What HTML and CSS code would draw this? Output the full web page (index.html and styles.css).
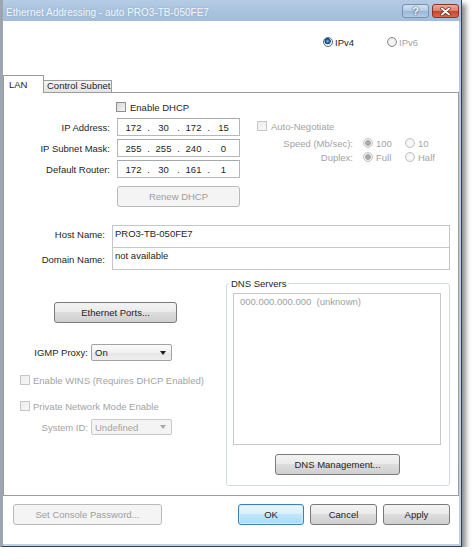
FILE: index.html
```html
<!DOCTYPE html>
<html>
<head>
<meta charset="utf-8">
<title>Ethernet Addressing</title>
<link rel="stylesheet" href="styles.css">
</head>
<body>
<div class="window">
  <div class="titlebar">
    <span class="title">Ethernet Addressing - auto PRO3-TB-050FE7</span>
    <div class="tb-buttons">
      <div class="tb-btn help">?</div>
      <div class="tb-btn close">
        <svg width="11" height="9" viewBox="0 0 11 9"><path d="M2 1.5 L9 7.5 M9 1.5 L2 7.5" stroke="#5a1a10" stroke-width="3.2" stroke-linecap="round"/><path d="M2 1.5 L9 7.5 M9 1.5 L2 7.5" stroke="#ffffff" stroke-width="2" stroke-linecap="round"/></svg>
      </div>
    </div>
  </div>
  <div class="client">
    <div class="ipver">
      <div class="radio"><span class="rb on"></span><span>IPv4</span></div>
      <div class="radio dis"><span class="rb"></span><span>IPv6</span></div>
    </div>
    <div class="tabs">
      <div class="tab active">LAN</div>
      <div class="tab inactive">Control Subnet</div>
    </div>
    <div class="panel">
      <div class="sec-a">
        <div class="ipcol">
          <div class="check-row dhcp-row"><span class="cb"></span><span>Enable DHCP</span></div>
          <div class="iprow first">
            <span class="lbl-ip">IP Address:</span>
            <div class="ipbox"><span class="oct">172</span><span class="dot">.</span><span class="oct">30</span><span class="dot">.</span><span class="oct">172</span><span class="dot">.</span><span class="oct">15</span></div>
          </div>
          <div class="iprow">
            <span class="lbl-ip">IP Subnet Mask:</span>
            <div class="ipbox"><span class="oct">255</span><span class="dot">.</span><span class="oct">255</span><span class="dot">.</span><span class="oct">240</span><span class="dot">.</span><span class="oct">0</span></div>
          </div>
          <div class="iprow">
            <span class="lbl-ip">Default Router:</span>
            <div class="ipbox"><span class="oct">172</span><span class="dot">.</span><span class="oct">30</span><span class="dot">.</span><span class="oct">161</span><span class="dot">.</span><span class="oct">1</span></div>
          </div>
          <div class="btn dis btn-renew">Renew DHCP</div>
        </div>
        <div class="linkcol">
          <div class="check-row auto-row dis"><span class="cb dis"></span><span>Auto-Negotiate</span></div>
          <div class="link-row speed-row">
            <span class="lbl-link">Speed (Mb/sec):</span>
            <div class="opt dis"><span class="rb dis on"></span><span>100</span></div>
            <div class="opt dis"><span class="rb dis"></span><span>10</span></div>
          </div>
          <div class="link-row duplex-row">
            <span class="lbl-link">Duplex:</span>
            <div class="opt dis"><span class="rb dis on"></span><span>Full</span></div>
            <div class="opt dis"><span class="rb dis"></span><span>Half</span></div>
          </div>
        </div>
      </div>

      <div class="names">
        <div class="namerow host">
          <span class="lbl-name">Host Name:</span>
          <div class="namebox">PRO3-TB-050FE7</div>
        </div>
        <div class="namerow domain">
          <span class="lbl-name">Domain Name:</span>
          <div class="namebox">not available</div>
        </div>
      </div>

      <div class="sec-c">
        <div class="leftcol">
          <div class="btn btn-eth">Ethernet Ports...</div>
          <div class="sel-row igmp-row">
            <span class="lbl-sel">IGMP Proxy:</span>
            <div class="select"><span>On</span><span class="arrow"></span></div>
          </div>
          <div class="check-row wins-row dis"><span class="cb dis"></span><span>Enable WINS (Requires DHCP Enabled)</span></div>
          <div class="check-row priv-row dis"><span class="cb dis"></span><span>Private Network Mode Enable</span></div>
          <div class="sel-row sysid-row dis">
            <span class="lbl-sel">System ID:</span>
            <div class="select dis"><span>Undefined</span><span class="arrow"></span></div>
          </div>
        </div>
        <div class="group">
          <div class="group-title">DNS Servers</div>
          <div class="listbox">000.000.000.000  (unknown)</div>
          <div class="btn btn-dns">DNS Management...</div>
        </div>
      </div>
    </div>

    <div class="footer">
      <div class="btn dis btn-pw">Set Console Password...</div>
      <div class="btn ok btn-ok">OK</div>
      <div class="btn btn-cancel">Cancel</div>
      <div class="btn btn-apply">Apply</div>
    </div>
  </div>
</div>
</body>
</html>
```
FILE: styles.css
```css
body {
  margin: 0;
  background: #ffffff;
  font-family: "Liberation Sans", Arial, sans-serif;
  font-size: 9.5px;
  line-height: 11px;
  color: #1e1e1e;
}

.window {
  width: 462px;
  height: 547px;
  box-sizing: border-box;
  border-left: 3px solid #9ea5ae;
  border-right: 1px solid #35404c;
  border-bottom: 1px solid #35404c;
  padding: 0 2px 2px 0;
  background: linear-gradient(#b4cbe3 0, #a2bdda 21px, #b3c9e1 22px, #bdd1e6 100%);
  box-shadow: 4px 4px 5px rgba(0, 0, 0, 0.45);
  display: flex;
  flex-direction: column;
}

/* title bar */
.titlebar {
  height: 21px;
  display: flex;
  align-items: flex-start;
}
.title {
  flex: 1;
  margin: 6px 0 0 3px;
  font-size: 10px;
  line-height: 14px;
  color: #f4f7fb;
  text-shadow: 0 0 2px rgba(120, 145, 175, 0.6);
}
.tb-buttons {
  display: flex;
  gap: 3px;
  margin-top: 4px;
}
.tb-btn {
  width: 27px;
  height: 14px;
  box-sizing: border-box;
  border-radius: 3px;
  display: flex;
  align-items: center;
  justify-content: center;
}
.help {
  border: 1px solid #7590b0;
  background: linear-gradient(#d3e1ef 0, #b5cbe2 50%, #98b6d6 51%, #b2cce6 100%);
  color: #ffffff;
  font-weight: bold;
  font-size: 11px;
  text-shadow: 0 0 2px #3b5675, 0 0 1px #3b5675;
}
.close {
  width: 27px;
  border: 1px solid #8a3426;
  background: linear-gradient(#eaa899 0, #d9806a 50%, #c5452c 51%, #d66a4f 100%);
}

/* client */
.client {
  flex: 1;
  background: #ffffff;
  display: flex;
  flex-direction: column;
}

.ipver {
  margin-top: 15px;
  padding-left: 320px;
  height: 12px;
  display: flex;
  align-items: center;
}
.radio {
  display: flex;
  align-items: center;
  gap: 2px;
  width: 64px;
}
.dis {
  color: #a3a3a3;
}

/* radio / checkbox */
.rb {
  width: 10px;
  height: 10px;
  box-sizing: border-box;
  border-radius: 50%;
  border: 1px solid #8d8d8d;
  background: radial-gradient(circle at 50% 50%, #ffffff 0, #ececec 60%, #d6d6d6 100%);
  flex: none;
}
.rb.on {
  border-color: #5d6a78;
  background: radial-gradient(circle at 45% 40%, #8fc1ee 0, #2a6db3 1.6px, #0e3a6c 2.8px, #e9eef3 3.4px, #ffffff 100%);
}
.rb.dis {
  border-color: #c2c2c2;
  background: radial-gradient(circle at 50% 50%, #ffffff 0, #f3f3f3 60%, #e6e6e6 100%);
}
.rb.dis.on {
  background: radial-gradient(circle at 50% 50%, #b5b5b5 0, #9e9e9e 2.4px, #f2f2f2 3.2px, #ffffff 100%);
}
.cb {
  width: 10px;
  height: 10px;
  box-sizing: border-box;
  border: 1px solid #8f8f8f;
  background: linear-gradient(135deg, #d6d6d6 0, #f6f6f6 100%);
  flex: none;
}
.cb.dis {
  border-color: #c6c6c6;
  background: linear-gradient(135deg, #ececec 0, #f8f8f8 100%);
}
.check-row {
  height: 10px;
  display: flex;
  align-items: center;
  gap: 4px;
}

/* tabs */
.tabs {
  margin-top: 27px;
  margin-bottom: -1px;
  height: 18px;
  display: flex;
  align-items: flex-end;
}
.tab {
  box-sizing: border-box;
  border: 1px solid #9c9c9c;
  border-bottom: none;
}
.tab.active {
  position: relative;
  z-index: 1;
  width: 41px;
  height: 18px;
  background: #ffffff;
  padding: 3px 0 0 5px;
}
.tab.inactive {
  width: 68px;
  height: 13px;
  border-left: none;
  background: linear-gradient(#f4f4f4, #e3e3e3);
  padding: 0 0 0 3px;
  line-height: 10px;
}

.panel {
  height: 404px;
  box-sizing: border-box;
  border: 1px solid #9c9c9c;
  background: #ffffff;
}

/* section a */
.sec-a {
  display: flex;
}
.ipcol {
  width: 252px;
}
.dhcp-row {
  margin-top: 9px;
  padding-left: 112px;
}
.iprow {
  display: flex;
  align-items: center;
  margin-top: 3px;
}
.iprow.first {
  margin-top: 6px;
}
.lbl-ip {
  width: 106px;
  margin-right: 7px;
  text-align: right;
}
.ipbox {
  width: 123px;
  height: 18px;
  box-sizing: border-box;
  border: 1px solid #b4b8bd;
  border-top-color: #a4a9ae;
  padding-left: 4px;
  display: flex;
  align-items: center;
}
.oct {
  width: 23px;
  text-align: center;
}
.dot {
  width: 7px;
  text-align: center;
}

.btn {
  box-sizing: border-box;
  height: 21px;
  border: 1px solid #7a7a7a;
  border-radius: 3px;
  background: linear-gradient(#f3f3f3 0, #ebebeb 45%, #dddddd 50%, #cfcfcf 100%);
  display: flex;
  align-items: center;
  justify-content: center;
  color: #1e1e1e;
}
.btn.dis {
  border-color: #b6babd;
  background: #f4f4f4;
  color: #9d9d9d;
}
.btn.ok {
  border-color: #3d80b3;
  background: linear-gradient(#eaf6fd 0, #d9f0fc 45%, #bee6fd 50%, #a9dbf6 100%);
  box-shadow: inset 0 0 0 1px #d3edfb;
}
.btn-renew {
  width: 123px;
  margin: 8px 0 0 113px;
}

.linkcol {
  padding-left: 1px;
}
.auto-row {
  margin-top: 28px;
}
.link-row {
  height: 10px;
  display: flex;
  align-items: center;
}
.speed-row {
  margin-top: 7px;
}
.duplex-row {
  margin-top: 4px;
}
.lbl-link {
  width: 96px;
  margin-right: 10px;
  text-align: right;
  color: #a3a3a3;
}
.opt {
  width: 42px;
  display: flex;
  align-items: center;
  gap: 3px;
}

/* names */
.names {
  margin-top: 18px;
}
.namerow {
  display: flex;
  align-items: flex-start;
}
.namerow.domain {
  margin-top: -1px;
}
.lbl-name {
  width: 101px;
  margin-right: 7px;
  text-align: right;
}
.host .lbl-name {
  padding-top: 4px;
}
.domain .lbl-name {
  padding-top: 7px;
}
.namebox {
  width: 338px;
  height: 23px;
  box-sizing: border-box;
  border: 1px solid #c3c7cb;
  padding: 2px 0 0 2px;
}

/* section c */
.sec-c {
  display: flex;
  align-items: flex-start;
}
.leftcol {
  width: 222px;
}
.btn-eth {
  width: 123px;
  margin: 32px 0 0 50px;
}
.sel-row {
  display: flex;
  align-items: center;
}
.igmp-row {
  margin-top: 21px;
}
.sysid-row {
  margin-top: 8px;
}
.lbl-sel {
  width: 84px;
  margin-right: 3px;
  text-align: right;
}
.select {
  width: 81px;
  height: 17px;
  box-sizing: border-box;
  border: 1px solid #a3a3a3;
  border-radius: 2px;
  background: linear-gradient(#fbfbfb 0, #f1f1f1 50%, #e6e6e6 51%, #eeeeee 100%);
  display: flex;
  align-items: center;
  justify-content: space-between;
  padding: 0 5px 0 3px;
  color: #1e1e1e;
}
.sysid-row .select {
  height: 16px;
}
.select.dis {
  border-color: #cacaca;
  background: #f4f4f4;
  color: #a3a3a3;
}
.arrow {
  width: 0;
  height: 0;
  border-left: 3.5px solid transparent;
  border-right: 3.5px solid transparent;
  border-top: 4px solid #1e1e1e;
}
.select.dis .arrow {
  border-top-color: #a8a8a8;
}
.wins-row {
  margin-top: 14px;
  padding-left: 16px;
  gap: 3px;
}
.priv-row {
  margin-top: 16px;
  padding-left: 16px;
  gap: 3px;
}

.group {
  width: 224px;
  margin-top: 13px;
  box-sizing: border-box;
  border: 1px solid #d3dbe1;
  border-radius: 3px;
  padding-bottom: 10px;
}
.group-title {
  width: fit-content;
  margin: -6px 0 0 2px;
  padding: 0 2px;
  background: #ffffff;
}
.listbox {
  width: 208px;
  height: 152px;
  box-sizing: border-box;
  margin: 4px 0 0 6px;
  border: 1px solid #c6c9cc;
  padding: 2px 0 0 6px;
  color: #a0a0a0;
  white-space: pre;
}
.btn-dns {
  width: 125px;
  margin: 9px 0 0 48px;
}

/* footer */
.footer {
  display: flex;
  margin-top: 8px;
  padding: 0 9px 0 10px;
}
.btn-pw {
  width: 149px;
}
.btn-ok {
  width: 66px;
  margin-left: auto;
}
.btn-cancel {
  width: 67px;
  margin-left: 6px;
}
.btn-apply {
  width: 67px;
  margin-left: 6px;
}
```
